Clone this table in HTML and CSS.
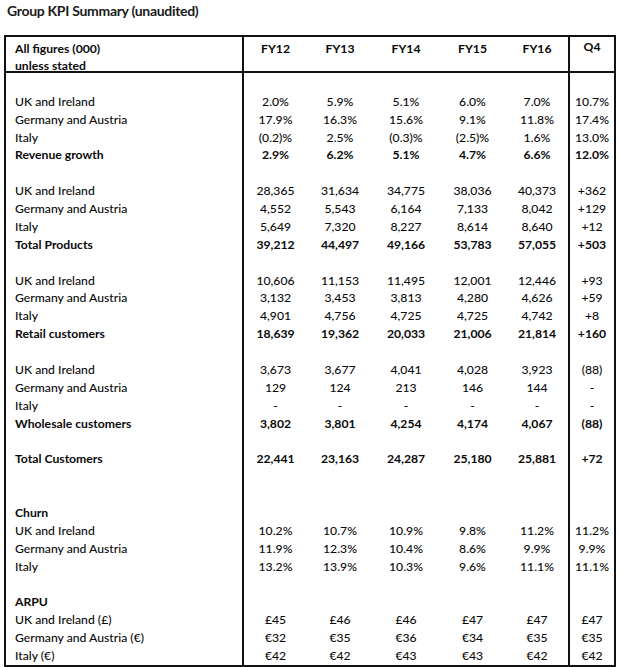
FILE: index.html
```html
<!DOCTYPE html>
<html lang="en">
<head>
<meta charset="utf-8">
<title>Group KPI Summary</title>
<link rel="stylesheet" href="styles.css">
</head>
<body>
<h1 class="title">Group KPI Summary (unaudited)</h1>
<table class="kpi">
  <colgroup>
    <col class="c-label"><col class="c-fy12"><col class="c-fy13"><col class="c-fy14"><col class="c-fy15"><col class="c-fy16"><col class="c-q4">
  </colgroup>
  <thead>
    <tr class="head">
      <th class="label"><div class="hd">All figures (000)<br>unless stated</div></th>
      <th><div class="hd">FY12</div></th><th><div class="hd">FY13</div></th><th><div class="hd">FY14</div></th><th><div class="hd">FY15</div></th><th class="last"><div class="hd">FY16</div></th><th class="q4"><div class="hd">Q4</div></th>
    </tr>
  </thead>
  <tbody>
    <tr class="spacer"><td class="label"></td><td></td><td></td><td></td><td></td><td class="last"></td><td></td></tr>
    <tr><td class="label">UK and Ireland</td><td>2.0%</td><td>5.9%</td><td>5.1%</td><td>6.0%</td><td class="last">7.0%</td><td>10.7%</td></tr>
    <tr><td class="label">Germany and Austria</td><td>17.9%</td><td>16.3%</td><td>15.6%</td><td>9.1%</td><td class="last">11.8%</td><td>17.4%</td></tr>
    <tr><td class="label">Italy</td><td>(0.2)%</td><td>2.5%</td><td>(0.3)%</td><td>(2.5)%</td><td class="last">1.6%</td><td>13.0%</td></tr>
    <tr class="bold"><td class="label">Revenue growth</td><td>2.9%</td><td>6.2%</td><td>5.1%</td><td>4.7%</td><td class="last">6.6%</td><td>12.0%</td></tr>
    <tr><td class="label"></td><td></td><td></td><td></td><td></td><td class="last"></td><td></td></tr>
    <tr><td class="label">UK and Ireland</td><td>28,365</td><td>31,634</td><td>34,775</td><td>38,036</td><td class="last">40,373</td><td>+362</td></tr>
    <tr><td class="label">Germany and Austria</td><td>4,552</td><td>5,543</td><td>6,164</td><td>7,133</td><td class="last">8,042</td><td>+129</td></tr>
    <tr><td class="label">Italy</td><td>5,649</td><td>7,320</td><td>8,227</td><td>8,614</td><td class="last">8,640</td><td>+12</td></tr>
    <tr class="bold"><td class="label">Total Products</td><td>39,212</td><td>44,497</td><td>49,166</td><td>53,783</td><td class="last">57,055</td><td>+503</td></tr>
    <tr><td class="label"></td><td></td><td></td><td></td><td></td><td class="last"></td><td></td></tr>
    <tr><td class="label">UK and Ireland</td><td>10,606</td><td>11,153</td><td>11,495</td><td>12,001</td><td class="last">12,446</td><td>+93</td></tr>
    <tr><td class="label">Germany and Austria</td><td>3,132</td><td>3,453</td><td>3,813</td><td>4,280</td><td class="last">4,626</td><td>+59</td></tr>
    <tr><td class="label">Italy</td><td>4,901</td><td>4,756</td><td>4,725</td><td>4,725</td><td class="last">4,742</td><td>+8</td></tr>
    <tr class="bold"><td class="label">Retail customers</td><td>18,639</td><td>19,362</td><td>20,033</td><td>21,006</td><td class="last">21,814</td><td>+160</td></tr>
    <tr><td class="label"></td><td></td><td></td><td></td><td></td><td class="last"></td><td></td></tr>
    <tr><td class="label">UK and Ireland</td><td>3,673</td><td>3,677</td><td>4,041</td><td>4,028</td><td class="last">3,923</td><td>(88)</td></tr>
    <tr><td class="label">Germany and Austria</td><td>129</td><td>124</td><td>213</td><td>146</td><td class="last">144</td><td>-</td></tr>
    <tr><td class="label">Italy</td><td>-</td><td>-</td><td>-</td><td>-</td><td class="last">-</td><td>-</td></tr>
    <tr class="bold"><td class="label">Wholesale customers</td><td>3,802</td><td>3,801</td><td>4,254</td><td>4,174</td><td class="last">4,067</td><td>(88)</td></tr>
    <tr><td class="label"></td><td></td><td></td><td></td><td></td><td class="last"></td><td></td></tr>
    <tr class="bold"><td class="label">Total Customers</td><td>22,441</td><td>23,163</td><td>24,287</td><td>25,180</td><td class="last">25,881</td><td>+72</td></tr>
    <tr><td class="label"></td><td></td><td></td><td></td><td></td><td class="last"></td><td></td></tr>
    <tr><td class="label"></td><td></td><td></td><td></td><td></td><td class="last"></td><td></td></tr>
    <tr><td class="label strong">Churn</td><td></td><td></td><td></td><td></td><td class="last"></td><td></td></tr>
    <tr><td class="label">UK and Ireland</td><td>10.2%</td><td>10.7%</td><td>10.9%</td><td>9.8%</td><td class="last">11.2%</td><td>11.2%</td></tr>
    <tr><td class="label">Germany and Austria</td><td>11.9%</td><td>12.3%</td><td>10.4%</td><td>8.6%</td><td class="last">9.9%</td><td>9.9%</td></tr>
    <tr><td class="label">Italy</td><td>13.2%</td><td>13.9%</td><td>10.3%</td><td>9.6%</td><td class="last">11.1%</td><td>11.1%</td></tr>
    <tr><td class="label"></td><td></td><td></td><td></td><td></td><td class="last"></td><td></td></tr>
    <tr><td class="label strong">ARPU</td><td></td><td></td><td></td><td></td><td class="last"></td><td></td></tr>
    <tr><td class="label">UK and Ireland (£)</td><td>£45</td><td>£46</td><td>£46</td><td>£47</td><td class="last">£47</td><td>£47</td></tr>
    <tr><td class="label">Germany and Austria (€)</td><td>€32</td><td>€35</td><td>€36</td><td>€34</td><td class="last">€35</td><td>€35</td></tr>
    <tr><td class="label">Italy (€)</td><td>€42</td><td>€42</td><td>€43</td><td>€43</td><td class="last">€42</td><td>€42</td></tr>
  </tbody>
</table>
</body>
</html>
```

FILE: styles.css
```css
* { box-sizing: border-box; }

html, body {
  margin: 0;
  padding: 0;
  background: #ffffff;
}

body {
  font-family: "Lato", "Open Sans", "Liberation Sans", sans-serif;
  color: #0a0a0a;
  width: 620px;
  height: 667px;
  overflow: hidden;
}

.title {
  margin: 0;
  padding: 2px 0 0 7px;
  font-size: 14px;
  line-height: 18px;
  font-weight: 700;
  letter-spacing: -0.3px;
  color: #1a1a1a;
}

.kpi {
  margin: 15px 0 0 4px;
  width: 612px;
  table-layout: fixed;
  border-collapse: separate;
  border-spacing: 0;
  border: 2px solid #111;
  font-size: 12.2px;
}

.c-label { width: 238px; }
.c-fy12 { width: 63px; }
.c-fy13 { width: 66px; }
.c-fy14 { width: 66px; }
.c-fy15 { width: 67px; }
.c-fy16 { width: 64px; }
.c-q4 { width: 44px; }

.kpi th,
.kpi td {
  padding: 0;
  text-align: center;
  white-space: nowrap;
  font-weight: 500;
}

.kpi .label {
  text-align: left;
  padding-left: 9px;
  border-right: 2px solid #111;
}

.kpi .last {
  border-right: 2px solid #111;
}

.head th {
  font-weight: 700;
  vertical-align: top;
  padding-top: 3px;
  border-bottom: 2px solid #111;
}

.head .hd {
  height: 31px;
  line-height: 17px;
}

.head th.label { padding-left: 9px; }
.head th.q4 { padding-top: 1px; }

.kpi tbody td {
  height: 17.88px;
  line-height: 17.88px;
}

.kpi tbody tr.spacer td {
  height: 19.8px;
}

.kpi tr.bold td,
.kpi td.strong {
  font-weight: 700;
}
```
